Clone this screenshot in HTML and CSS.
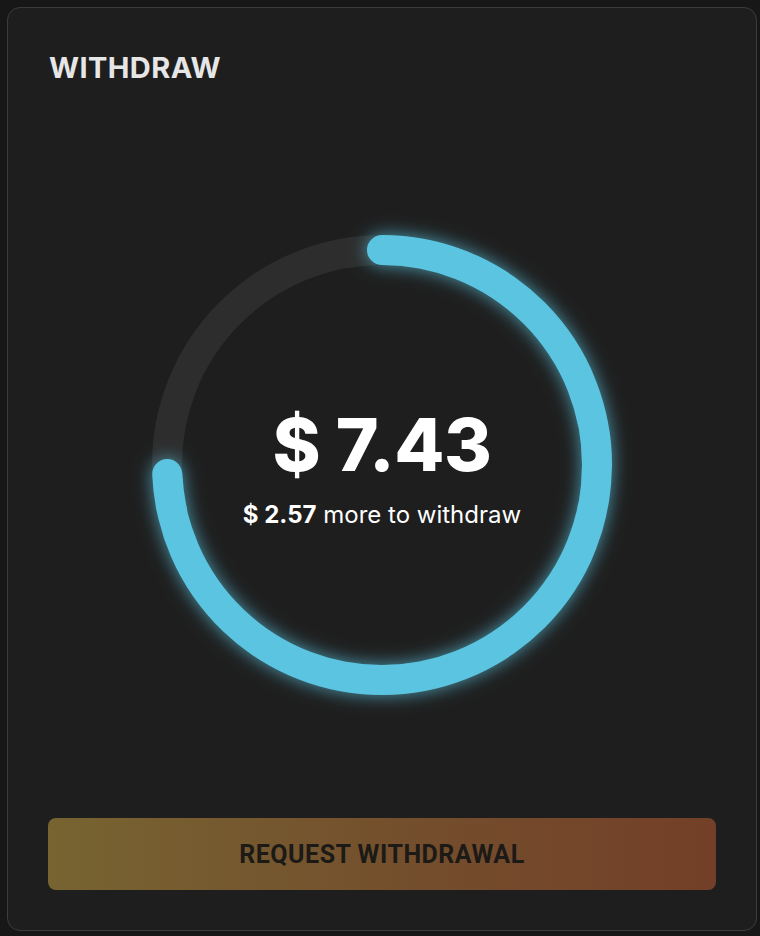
FILE: index.html
```html
<!DOCTYPE html>
<html>
<head>
<meta charset="utf-8">
<link rel="stylesheet" href="styles.css">
</head>
<body>
<div class="card">
  <h1 class="title">WITHDRAW</h1>
  <div class="ring-wrap">
    <svg class="ring" width="500" height="500" viewBox="0 0 500 500">
      <circle class="track" cx="250" cy="250" r="215"></circle>
      <circle class="progress" cx="250" cy="250" r="215" transform="rotate(-90 250 250)" style="stroke-dasharray: 1003.7 1350.9"></circle>
    </svg>
    <div class="center">
      <div class="amount">$ 7.43</div>
      <div class="sub"><b>$ 2.57</b> more to withdraw</div>
    </div>
  </div>
  <button class="btn">REQUEST WITHDRAWAL</button>
</div>
</body>
</html>
```
FILE: styles.css
```css
html, body {
  margin: 0;
  padding: 0;
  background: #171717;
}
body {
  padding: 7px 3px 5px 7px;
  font-family: Inter, "Noto Sans", sans-serif;
}
.card {
  box-sizing: border-box;
  height: 924px;
  border: 1px solid #3c3c3c;
  border-radius: 13px;
  background: #1e1e1e;
  padding: 44px 40px 40px 40px;
  display: flex;
  flex-direction: column;
}
.title {
  margin: 0;
  font-size: 29px;
  line-height: 32px;
  font-weight: 700;
  letter-spacing: 0.4px;
  color: #e6e6e6;
  padding-left: 1px;
}
.ring-wrap {
  margin-top: 131px;
  display: grid;
  justify-items: center;
  align-items: center;
}
.ring, .center {
  grid-area: 1 / 1;
}
.ring {
  overflow: visible;
}
.track {
  fill: none;
  stroke: #2d2d2d;
  stroke-width: 30;
}
.progress {
  fill: none;
  stroke: #5bc5e1;
  stroke-width: 30;
  stroke-linecap: round;
  filter: drop-shadow(0 0 9px rgba(91, 197, 225, 0.75));
}
.center {
  display: flex;
  flex-direction: column;
  align-items: center;
  color: #ffffff;
  margin-top: 2px;
}
.amount {
  font-size: 73px;
  line-height: 84px;
  font-weight: 800;
  letter-spacing: -0.5px;
}
.sub {
  font-size: 24px;
  line-height: 30px;
  margin-top: 13px;
  font-weight: 400;
}
.sub b {
  font-weight: 700;
}
.btn {
  margin-top: auto;
  height: 72px;
  border: none;
  border-radius: 8px;
  background: linear-gradient(90deg, #776431 0%, #74502d 50%, #733f28 100%);
  color: #1b1a17;
  font-family: Roboto, "Liberation Sans", sans-serif;
  font-weight: 700;
  font-size: 25px;
  letter-spacing: 0.5px;
  cursor: pointer;
}
```
